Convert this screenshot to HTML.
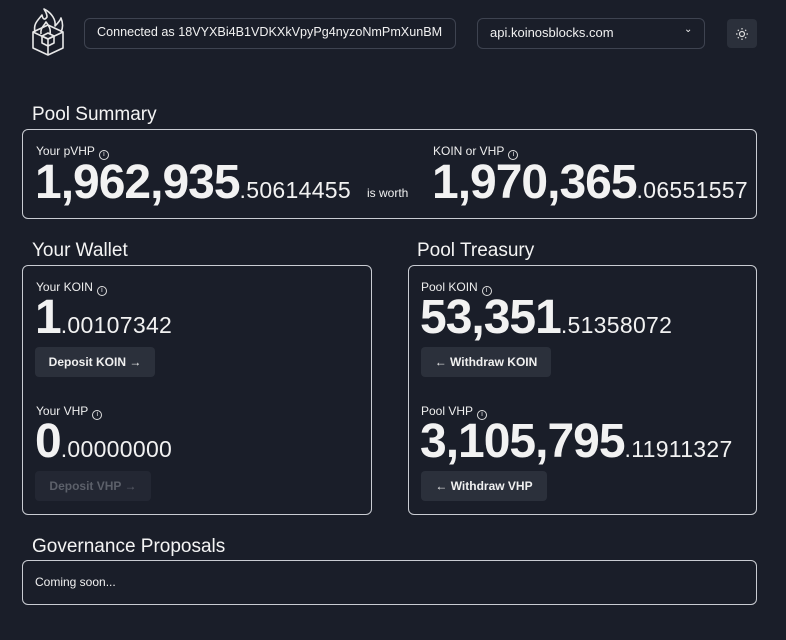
<!DOCTYPE html>
<html><head><meta charset="utf-8"><style>
*{margin:0;padding:0;box-sizing:border-box}
body{width:786px;height:640px;background:#1a1e29;color:#f1f1f1;font-family:"Liberation Sans",sans-serif;position:relative;overflow:hidden}
.a{position:absolute}
.box{position:absolute;border:1px solid #c9ccd2;border-radius:6px}
.h{position:absolute;font-size:19px;color:#f4f4f4}
.lab{position:absolute;font-size:12px;color:#eee;white-space:nowrap}
.lab i{display:inline-block;width:10px;height:10px;border:1px solid #ddd;border-radius:50%;margin-left:4px;vertical-align:-1px;font-style:normal;font-size:7px;text-align:center;line-height:8px}
.num{position:absolute;font-size:48px;line-height:48px;font-weight:bold;letter-spacing:-1px;white-space:nowrap;color:#f2f2f2}
.num small{font-size:23px;font-weight:normal;letter-spacing:0.3px}
.btn{position:absolute;height:30px;background:#2b303b;border-radius:4px;font-size:12px;font-weight:bold;line-height:30px;text-align:center;color:#f0f0f0}
</style></head><body>
<svg class="a" style="left:30px;top:8px" width="36" height="48" viewBox="0 0 36 48" fill="none" stroke="#e8e8e8" stroke-width="1.6" stroke-linejoin="round">
<path d="M3 24 L18 17 L33 24 L33 40 L18 47 L3 40 Z"/><path d="M3 24 L18 31 L33 24 M18 31 L18 47"/>
<path d="M12 28 L18 25 L24 28 L24 35 L18 38 L12 35 Z M12 28 L18 31 L24 28"/>
<path d="M5 24 C3 16 8 12 12 7 C13 12 15 12 17 9 C17 5 15 3 14 1 C22 5 26 12 25 18 C28 15 30 13 31 10 C33 15 33 20 31 24"/>
<path d="M11 26 C10 20 14 18 16 14 C19 18 21 21 20 26"/>
</svg>
<div class="box" style="left:84px;top:18px;width:372px;height:31px;border-color:#3e4350"></div>
<div class="a" style="left:97px;top:25px;font-size:12.6px">Connected as 18VYXBi4B1VDKXkVpyPg4nyzoNmPmXunBM</div>
<div class="box" style="left:477px;top:18px;width:228px;height:31px;border-color:#3e4350"></div>
<div class="a" style="left:490px;top:25px;font-size:13px">api.koinosblocks.com</div>
<div class="a" style="left:684px;top:24px;font-size:10px">&#8964;</div>
<div class="a" style="left:727px;top:19px;width:30px;height:29px;background:#2b303b;border-radius:4px"></div>
<svg class="a" style="left:735px;top:27px" width="14" height="14" viewBox="0 0 14 14" stroke="#ddd" fill="none" stroke-width="1.2"><circle cx="7" cy="7" r="2.5"/><path d="M7 1v1.5M7 11.5V13M1 7h1.5M11.5 7H13M2.8 2.8l1 1M10.2 10.2l1 1M2.8 11.2l1-1M10.2 3.8l1-1"/></svg>

<div class="h" style="left:32px;top:104px">Pool Summary</div>
<div class="box" style="left:22px;top:129px;width:735px;height:90px"></div>
<div class="lab" style="left:36px;top:144px">Your pVHP<i>i</i></div>
<div class="num" style="left:35px;top:159px">1,962,935<small>.50614455</small></div>
<div class="a" style="left:367px;top:186px;font-size:12px">is worth</div>
<div class="lab" style="left:433px;top:144px">KOIN or VHP<i>i</i></div>
<div class="num" style="left:432px;top:159px">1,970,365<small>.06551557</small></div>

<div class="h" style="left:32px;top:240px">Your Wallet</div>
<div class="box" style="left:22px;top:265px;width:350px;height:250px"></div>
<div class="lab" style="left:36px;top:280px">Your KOIN<i>i</i></div>
<div class="num" style="left:35px;top:294px">1<small>.00107342</small></div>
<div class="btn" style="left:35px;top:347px;width:120px">Deposit KOIN &#8594;</div>
<div class="lab" style="left:36px;top:404px">Your VHP<i>i</i></div>
<div class="num" style="left:35px;top:418px">0<small>.00000000</small></div>
<div class="btn" style="left:35px;top:471px;width:116px;background:#232733;color:#5c606a">Deposit VHP &#8594;</div>

<div class="h" style="left:417px;top:240px">Pool Treasury</div>
<div class="box" style="left:408px;top:265px;width:349px;height:250px"></div>
<div class="lab" style="left:421px;top:280px">Pool KOIN<i>i</i></div>
<div class="num" style="left:420px;top:294px">53,351<small>.51358072</small></div>
<div class="btn" style="left:421px;top:347px;width:130px">&#8592; Withdraw KOIN</div>
<div class="lab" style="left:421px;top:404px">Pool VHP<i>i</i></div>
<div class="num" style="left:420px;top:418px">3,105,795<small>.11911327</small></div>
<div class="btn" style="left:421px;top:471px;width:126px">&#8592; Withdraw VHP</div>

<div class="h" style="left:32px;top:536px">Governance Proposals</div>
<div class="box" style="left:22px;top:560px;width:735px;height:45px"></div>
<div class="a" style="left:35px;top:575px;font-size:12px">Coming soon...</div>
</body></html>
